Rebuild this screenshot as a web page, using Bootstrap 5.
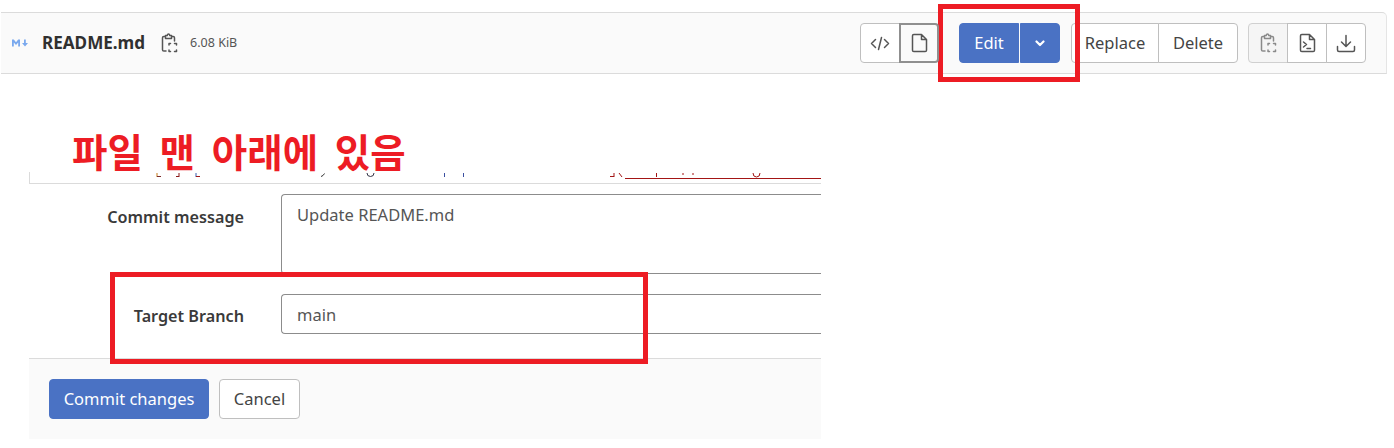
<!DOCTYPE html>
<html lang="ko">
<head>
    <meta charset="UTF-8">
    <title>README.md</title>
    <link href="https://cdn.jsdelivr.net/npm/bootstrap@5.3.0/dist/css/bootstrap.min.css" rel="stylesheet">
    <style>
        body {
            width: 1394px;
            height: 448px;
            overflow: hidden;
            background: #fff;
            color: #303030;
            font-family: "Noto Sans", "Open Sans", sans-serif;
            font-size: 16.5px;
        }
        .shot { position: relative; width: 1394px; height: 448px; padding-top: 12px; }
        .file-bar {
            height: 62px;
            margin-left: 1px;
            width: 1386px;
            background: #fafafa;
            border-top: 1px solid #dbdbdb;
            border-bottom: 1px solid #dbdbdb;
            border-right: 1px solid #e5e5e5;
            border-top-right-radius: 5px;
            padding-left: 11px;
            padding-right: 20px;
        }
        .file-name { font-size: 17.1px; font-weight: 700; margin-left: 12px; margin-right: 16px; }
        .file-size { font-size: 12.5px; color: #555; margin-left: 12px; }
        .ico { display: block; fill: none; stroke: #555; stroke-width: 1.5; stroke-linejoin: round; stroke-linecap: round; }
        .btn-plain {
            --bs-btn-color: #444;
            --bs-btn-bg: #fff;
            --bs-btn-border-color: #bfbfbf;
            --bs-btn-font-size: 16.5px;
            --bs-btn-padding-y: 0;
            --bs-btn-padding-x: 14px;
            --bs-btn-border-radius: 4px;
            --bs-btn-line-height: 38px;
            height: 40px;
        }
        .btn-ico { --bs-btn-padding-x: 0; width: 40px; display: flex; align-items: center; justify-content: center; }
        .btn-ico.btn-on { border: 2px solid #8f8f8f; background: #fafafa; z-index: 1; }
        .btn-ico.btn-off { background: #f5f5f5; --bs-btn-border-color: #d0d0d0; }
        .btn-ico.btn-off .ico { stroke: #8a8a8a; }
        .btn-blue {
            --bs-btn-color: #fff;
            --bs-btn-bg: #4a72c4;
            --bs-btn-border-color: #4a72c4;
            --bs-btn-font-size: 16.5px;
            --bs-btn-padding-y: 0;
            --bs-btn-padding-x: 14px;
            --bs-btn-border-radius: 4px;
            --bs-btn-line-height: 38px;
            height: 40px;
        }
        .edit-main { width: 60px; padding: 0; }
        .edit-drop { width: 40px; padding: 0; margin-left: 1px !important; display: flex; align-items: center; justify-content: center; }
        .group-view { margin-right: 20px; }
        .group-edit { margin-right: 11px; }
        .group-action { margin-right: 10px; }
        .btn-replace { width: 88px; padding: 0; }
        .btn-delete { width: 80px; padding: 0; }

        .commit-shot {
            margin-left: 29px;
            margin-top: 98px;
            width: 792px;
            height: 268px;
            overflow: hidden;
        }
        .clip-line {
            height: 12px;
            border-left: 1px solid #dbdbdb;
            border-bottom: 1px solid #dbdbdb;
        }
        .clip-line svg { display: block; }
        .commit-row { display: flex; align-items: flex-start; }
        .commit-label { width: 215px; text-align: right; font-weight: 600; font-size: 16.2px; color: #3a3a3a; flex-shrink: 0; }
        .commit-field {
            flex: 1;
            margin-left: 37px;
            border: 1px solid #8c8c8c;
            border-right: 0;
            border-radius: 4px 0 0 4px;
            padding: 0 15px;
            color: #555;
        }
        .row-message { margin-top: 10px; }
        .row-message .commit-label { padding-top: 11px; }
        .row-message .commit-field { height: 80px; padding-top: 8px; }
        .row-branch { margin-top: 20px; }
        .row-branch .commit-label { padding-top: 10px; }
        .row-branch .commit-field { height: 40px; line-height: 39px; }
        .commit-foot {
            margin-top: 24px;
            height: 81px;
            background: #fafafa;
            border-top: 1px solid #dbdbdb;
            padding: 20px 20px;
        }
        .commit-foot .btn-blue { width: 160px; padding: 0; margin-right: 10px; }
        .commit-foot .btn-plain { width: 81px; padding: 0; }

        .note-box { position: absolute; border: 5px solid #ed1c24; pointer-events: none; }
        .note-edit { left: 938px; top: 4px; width: 142px; height: 78px; }
        .note-branch { left: 110px; top: 272px; width: 538px; height: 92px; }
        .note-text {
            position: absolute;
            left: 72px;
            top: 124px;
            color: #ed1c24;
            font-family: "Noto Sans CJK KR", "Noto Sans", sans-serif;
            font-weight: 700;
            font-size: 38.5px;
            line-height: 52px;
            word-spacing: 6px;
            white-space: nowrap;
        }
    </style>
</head>
<body>
<div class="shot">
    <!-- file header -->
    <div class="file-bar d-flex align-items-center">
        <svg width="18" height="8" viewBox="0 0 18 8" fill="#7aa9ee"><path d="M0 7.500V.500h1.800L4 3.200 6.200.500H8v7H6.200V3.400L4 6 1.800 3.400v4.100zM12 .500h1.800v3.500H16l-3 3.500-3-3.500h2z"/></svg>
        <span class="file-name">README.md</span>
        <svg class="ico" width="17" height="20" viewBox="0 0 17 20"><path d="M4.500 3.500H2.800Q1.500 3.500 1.500 4.800v11.900q0 1.300 1.300 1.300H5M10.500 3.500h1.700q1.300 0 1.300 1.300V8M4.500 2.500h1.700Q6.500 1 7.500 1t1.300 1.500h1.700v3h-6zM9.500 10.500H8v1.500M9.500 18.500H8V17M13.500 10.500h2V12M13.500 18.500h2V17"/></svg>
        <span class="file-size">6.08 KiB</span>

        <div class="btn-group group-view ms-auto">
            <button class="btn btn-plain btn-ico" type="button">
                <svg class="ico" width="20" height="15" viewBox="0 0 20 15"><path d="M5.500 3.500L1.500 7.500l4 4M14.500 3.500l4 4-4 4M11.500 1.500l-3 12"/></svg>
            </button>
            <button class="btn btn-plain btn-ico btn-on" type="button">
                <svg class="ico" width="17" height="20" viewBox="0 0 17 20"><path d="M2.800 1.500h7.700l5 5v10.700q0 1.300-1.300 1.300H2.800q-1.300 0-1.300-1.300V2.800q0-1.300 1.300-1.300zM10.500 1.500v5h5"/></svg>
            </button>
        </div>
        <div class="btn-group group-edit">
            <button class="btn btn-blue edit-main" type="button">Edit</button>
            <button class="btn btn-blue edit-drop" type="button" aria-label="More">
                <svg width="10" height="7" viewBox="0 0 10 7" fill="none" stroke="#fff" stroke-width="2.200" stroke-linecap="round" stroke-linejoin="round"><path d="M1.500 1.500L5 5l3.500-3.500"/></svg>
            </button>
        </div>
        <div class="btn-group group-action">
            <button class="btn btn-plain btn-replace" type="button">Replace</button>
            <button class="btn btn-plain btn-delete" type="button">Delete</button>
        </div>
        <div class="btn-group">
            <button class="btn btn-plain btn-ico btn-off" type="button">
                <svg class="ico" width="17" height="20" viewBox="0 0 17 20"><path d="M4.500 3.500H2.800Q1.500 3.500 1.500 4.800v11.900q0 1.300 1.300 1.300H5M10.500 3.500h1.700q1.300 0 1.300 1.300V8M4.500 2.500h1.700Q6.500 1 7.500 1t1.300 1.500h1.700v3h-6zM9.500 10.500H8v1.500M9.500 18.500H8V17M13.500 10.500h2V12M13.500 18.500h2V17"/></svg>
            </button>
            <button class="btn btn-plain btn-ico" type="button">
                <svg class="ico" width="17" height="20" viewBox="0 0 17 20"><path d="M2.800 1.500h7.700l5 5v10.700q0 1.300-1.300 1.300H2.800q-1.300 0-1.300-1.300V2.800q0-1.300 1.300-1.300zM10.500 1.500v5h5M4.500 9l3 2.500-3 2.500M8 15.500h3.500"/></svg>
            </button>
            <button class="btn btn-plain btn-ico" type="button">
                <svg class="ico" width="20" height="19" viewBox="0 0 20 19"><path d="M10 1.500V12M5.500 8l4.500 4.500L14.500 8M1.500 12.500V16q0 1.500 1.500 1.500h14q1.500 0 1.500-1.500v-3.500"/></svg>
            </button>
        </div>
    </div>

    <!-- commit form -->
    <div class="commit-shot">
        <div class="clip-line">
            <!-- bottom edge of the cut-off line above the form -->
            <svg width="791" height="12" viewBox="0 0 791 12" fill="none" stroke-width="1">
                <path stroke="#c77a1a" d="M127 1v4"/><path stroke="#7a2a2a" d="M127 4.500h4"/>
                <path stroke="#8a1a1a" d="M149 1v4M146 4.500h3"/>
                <path stroke="#3a5fb0" d="M166 1v4"/><path stroke="#a01818" d="M166 4.500h4"/>
                <path stroke="#333" d="M291 4.500l2-1 1.500-2"/>
                <path stroke="#334" d="M337 1q0 3.500 3.500 3.500T344 1"/>
                <path stroke="#3a4fa0" d="M414.500 1v4M433.500 1v4"/>
                <path stroke="#a31515" d="M580 4.500h4M584 1v4M589 1l3 4M595 6.500h196M626.500 1v4M653 1v2M663 1v2"/>
                <path stroke="#a31515" d="M723 1q0 4 3.500 4T730 1"/>
            </svg>
        </div>
        <div class="commit-row row-message">
            <div class="commit-label">Commit message</div>
            <div class="commit-field">Update README.md</div>
        </div>
        <div class="commit-row row-branch">
            <div class="commit-label">Target Branch</div>
            <div class="commit-field">main</div>
        </div>
        <div class="commit-foot d-flex">
            <button class="btn btn-blue" type="button">Commit changes</button>
            <button class="btn btn-plain" type="button">Cancel</button>
        </div>
    </div>

    <!-- annotations -->
    <div class="note-box note-edit"></div>
    <div class="note-box note-branch"></div>
    <div class="note-text">파일 맨 아래에 있음</div>
</div>
<script src="https://cdn.jsdelivr.net/npm/bootstrap@5.3.0/dist/js/bootstrap.bundle.min.js"></script>
</body>
</html>
